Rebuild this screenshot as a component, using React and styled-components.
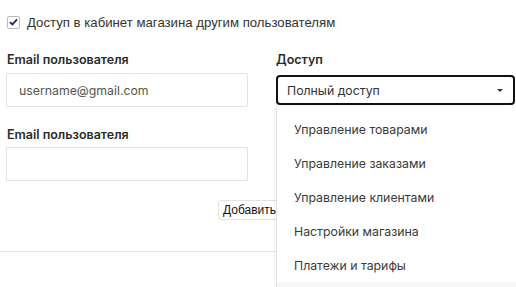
import React, { useState } from "react";
import styled, { createGlobalStyle } from "styled-components";

const GlobalStyle = createGlobalStyle`
  body {
    margin: 0;
    background: #fff;
    font-family: Inter, "Liberation Sans", sans-serif;
  }
`;

const Page = styled.div`
  width: 516px;
  height: 287px;
  overflow: hidden;
  position: relative;
`;

const Content = styled.div`
  padding: 15px 0 0 7px;
`;

const CheckRow = styled.label`
  display: flex;
  align-items: center;
  gap: 7px;
  font-family: "Liberation Sans", Arial, sans-serif;
  font-size: 13.2px;
  color: #333;
  height: 14px;
`;

const Box = styled.span`
  width: 11px;
  height: 11px;
  border: 1px solid #bbb;
  border-radius: 2px;
  display: flex;
  align-items: center;
  justify-content: center;
  background: #fff;
`;

const Grid = styled.div`
  display: grid;
  grid-template-columns: 241px 240px;
  column-gap: 28px;
  margin-top: 23px;
`;

const Field = styled.div`
  display: flex;
  flex-direction: column;
  position: relative;
  margin-bottom: ${(p) => p.$mb || 0}px;
`;

const Label = styled.div`
  font-size: 12.5px;
  font-weight: 600;
  color: #2b2b2b;
  height: 15px;
  margin-bottom: ${(p) => p.$gap}px;
`;

const Input = styled.input`
  box-sizing: border-box;
  width: 242px;
  margin-left: -1px;
  height: 34px;
  border: 1px solid #e3e3e3;
  border-radius: 1px;
  padding: 0 12px;
  font-family: Inter, "Liberation Sans", sans-serif;
  font-size: 12.3px;
  color: #555;
  outline: none;
`;

const Select = styled.div`
  box-sizing: border-box;
  width: 239px;
  height: 30px;
  border: 2px solid #111;
  border-radius: 4px;
  display: flex;
  align-items: center;
  justify-content: space-between;
  padding: 0 10px 0 9px;
  font-size: 12.3px;
  color: #333;
`;

const Caret = styled.span`
  width: 0;
  height: 0;
  border-left: 3px solid transparent;
  border-right: 3px solid transparent;
  border-top: 3px solid #333;
`;

const Menu = styled.ul`
  position: absolute;
  top: 54px;
  left: 0;
  width: 245px;
  margin: 0;
  padding: 6px 0 0;
  list-style: none;
  background: #fff;
  border-left: 1px solid #e2e2e2;
  box-shadow: 0 2px 6px rgba(0, 0, 0, 0.08);
  z-index: 2;
`;

const MenuItem = styled.li`
  height: 34px;
  display: flex;
  align-items: center;
  padding-left: 17px;
  font-size: 12.3px;
  color: #3a3a3a;
`;

const MenuEdge = styled.li`
  height: 10px;
  background: #f7f7f7;
`;

const ButtonRow = styled.div`
  display: flex;
  justify-content: center;
  margin-top: 19px;
`;

const AddButton = styled.button`
  font-family: "Liberation Sans", Arial, sans-serif;
  font-size: 12px;
  color: #111;
  background: #fff;
  border: 1px solid #e2e2e2;
  border-radius: 3px;
  height: 20px;
  width: 78px;
  padding: 0 4px;
  text-align: left;
  margin-left: -9px;
`;

const Divider = styled.hr`
  border: 0;
  border-top: 1px solid #e6e6e6;
  margin: 31px 0 0 -7px;
`;

const items = [
  "Управление товарами",
  "Управление заказами",
  "Управление клиентами",
  "Настройки магазина",
  "Платежи и тарифы",
];

const App = () => {
  const [email, setEmail] = useState("");

  return (
    <Page>
      <GlobalStyle />
      <Content>
        <CheckRow>
          <Box>
            <svg width="9" height="8" viewBox="0 0 9 8">
              <path d="M1 4.2 L3.4 6.5 L8 1.3" fill="none" stroke="#1b2a4a" strokeWidth="1.8" />
            </svg>
          </Box>
          Доступ в кабинет магазина другим пользователям
        </CheckRow>
        <Grid>
          <Field $mb={20}>
            <Label $gap={6}>Email пользователя</Label>
            <Input defaultValue="username@gmail.com" />
          </Field>
          <Field $mb={20}>
            <Label $gap={8}>Доступ</Label>
            <Select>
              Полный доступ
              <Caret />
            </Select>
            <Menu>
              {items.map((item) => (
                <MenuItem key={item}>{item}</MenuItem>
              ))}
              <MenuEdge />
            </Menu>
          </Field>
          <Field>
            <Label $gap={5}>Email пользователя</Label>
            <Input value={email} onChange={(e) => setEmail(e.target.value)} />
          </Field>
        </Grid>
        <ButtonRow>
          <AddButton>Добавить</AddButton>
        </ButtonRow>
        <Divider />
      </Content>
    </Page>
  );
};

export default App;
